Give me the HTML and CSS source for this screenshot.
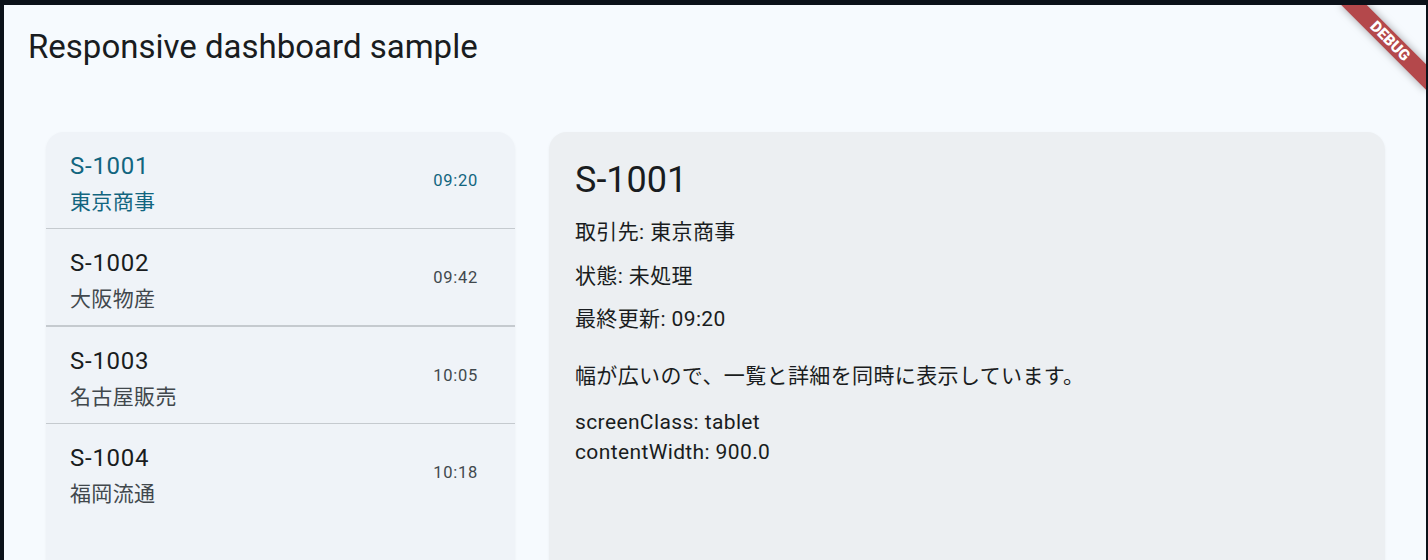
FILE: index.html
```
<!DOCTYPE html>
<html lang="ja">
<head>
<meta charset="utf-8">
<title>Responsive dashboard sample</title>
<link rel="stylesheet" href="styles.css">
</head>
<body>
<div class="window">
  <header class="appbar">
    <h1 class="title">Responsive dashboard sample</h1>
  </header>
  <main class="content">
    <section class="list-card">
      <div class="item selected">
        <div class="item-text">
          <div class="item-id">S-1001</div>
          <div class="item-name">東京商事</div>
        </div>
        <div class="item-time">09:20</div>
      </div>
      <div class="divider"></div>
      <div class="item">
        <div class="item-text">
          <div class="item-id">S-1002</div>
          <div class="item-name">大阪物産</div>
        </div>
        <div class="item-time">09:42</div>
      </div>
      <div class="divider"></div>
      <div class="item">
        <div class="item-text">
          <div class="item-id">S-1003</div>
          <div class="item-name">名古屋販売</div>
        </div>
        <div class="item-time">10:05</div>
      </div>
      <div class="divider"></div>
      <div class="item">
        <div class="item-text">
          <div class="item-id">S-1004</div>
          <div class="item-name">福岡流通</div>
        </div>
        <div class="item-time">10:18</div>
      </div>
    </section>
    <section class="detail-card">
      <h2 class="detail-title">S-1001</h2>
      <p class="detail-line first">取引先: 東京商事</p>
      <p class="detail-line">状態: 未処理</p>
      <p class="detail-line">最終更新: 09:20</p>
      <p class="detail-note">幅が広いので、一覧と詳細を同時に表示しています。</p>
      <p class="detail-meta">screenClass: tablet<br>contentWidth: 900.0</p>
    </section>
  </main>
  <div class="debug-banner">DEBUG</div>
</div>
</body>
</html>
```

FILE: styles.css
```
html, body {
  margin: 0;
  padding: 0;
}

body {
  background: #0b1119;
  overflow: hidden;
  height: 560px;
  font-family: Roboto, "Noto Sans CJK JP", sans-serif;
  color: #191c20;
}

.window {
  position: relative;
  margin: 5px 2px 0 4px;
  height: 700px;
  background: #f6fafe;
  overflow: hidden;
}

.appbar {
  height: 84px;
  display: flex;
  align-items: center;
  padding: 0 24px;
}

.title {
  margin: 0;
  font-size: 33px;
  line-height: 42px;
  font-weight: 400;
  color: #191c20;
}

.content {
  display: flex;
  align-items: flex-start;
  gap: 34px;
  padding: 42.5px 41px 0 42px;
}

.list-card {
  width: 469px;
  flex: none;
  height: 600px;
  border-radius: 18px;
  background: #eff3f8;
  overflow: hidden;
  box-shadow: 0 1px 3px rgba(0, 0, 0, 0.05);
}

.item {
  height: 96px;
  box-sizing: border-box;
  display: flex;
  align-items: flex-start;
  padding: 16px 37px 0 24px;
}

.item-text {
  flex: 1;
}

.item-id {
  font-size: 24px;
  line-height: 36px;
  letter-spacing: 0.75px;
  color: #191c20;
}

.item-name {
  margin-top: 3px;
  font-size: 21px;
  line-height: 30px;
  letter-spacing: 0.375px;
  color: #41484d;
}

.item-time {
  margin-top: 21px;
  font-size: 16.5px;
  line-height: 24px;
  letter-spacing: 0.75px;
  font-weight: 400;
  color: #41484d;
}

.item.selected .item-id,
.item.selected .item-name,
.item.selected .item-time {
  color: #12657f;
}

.divider {
  height: 1.5px;
  background: #c5cacf;
}

.detail-card {
  flex: 1;
  height: 600px;
  box-sizing: border-box;
  border-radius: 18px;
  background: #eceff2;
  padding: 24px 24px 24px 26px;
  box-shadow: 0 1px 3px rgba(0, 0, 0, 0.05);
}

.detail-title {
  margin: 0;
  font-size: 36px;
  line-height: 48px;
  font-weight: 400;
  color: #191c20;
}

.detail-line {
  margin: 13.5px 0 0;
  font-size: 21px;
  line-height: 30px;
  letter-spacing: 0.375px;
  color: #191c20;
}

.detail-line.first {
  margin-top: 13.5px;
}

.detail-note {
  margin: 27px 0 0;
  font-size: 21px;
  line-height: 30px;
  letter-spacing: 0.375px;
  color: #191c20;
}

.detail-meta {
  margin: 16px 0 0;
  font-size: 21px;
  line-height: 30px;
  letter-spacing: 0.375px;
  color: #191c20;
}

.debug-banner {
  position: absolute;
  top: 27px;
  right: -24px;
  width: 120px;
  height: 18px;
  transform: rotate(45deg);
  background: #b4484b;
  box-shadow: 0 0 8px rgba(0, 0, 0, 0.35);
  color: #ffffff;
  font-size: 15.3px;
  line-height: 18px;
  font-weight: 900;
  text-align: center;
}
```
